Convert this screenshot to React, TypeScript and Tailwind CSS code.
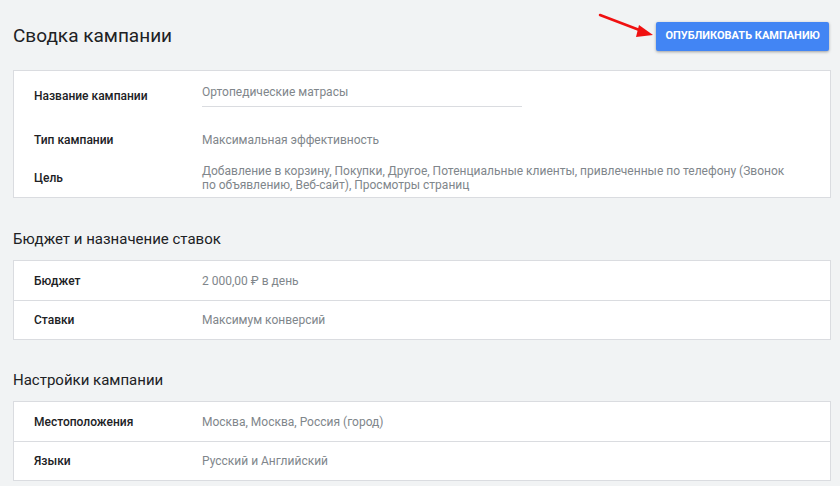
import React from 'react'

const font = { fontFamily: 'Roboto, "Noto Sans", Arial, sans-serif' }

function Row({ label, value, divider }: { label: string; value: string; divider?: boolean }) {
  return (
    <div className={'flex items-center h-[39px] ' + (divider ? 'border-t border-[#dadce0]' : '')}>
      <div className='w-[188px] pl-[20px] text-[12px] font-medium text-[#202124]'>{label}</div>
      <div className='text-[12px] text-[#80868b]'>{value}</div>
    </div>
  )
}

export default function App() {
  return (
    <div className='relative min-h-[486px] w-full bg-[#f1f3f4] pl-[13px] pr-[9px]' style={font}>
      <svg className='absolute left-[596px] top-[10px]' width='64' height='32' viewBox='0 0 64 32'>
        <line x1='4' y1='5' x2='46' y2='21' stroke='#f01010' strokeWidth='2.5' strokeLinecap='round' />
        <polygon points='57,25 43,15 40,27' fill='#f01010' />
      </svg>

      <div className='flex items-center justify-between h-[51px] pt-[22px]'>
        <h1 className='text-[19px] text-[#202124]'>Сводка кампании</h1>
        <button className='mr-[2px] h-[29px] rounded-[2px] bg-[#4285f4] px-[9px] text-[11px] font-bold text-white shadow-[0_1px_3px_rgba(0,0,0,0.35)]'>
          ОПУБЛИКОВАТЬ КАМПАНИЮ
        </button>
      </div>

      <div className='mt-[19px] border border-[#dadce0] bg-white'>
        <div className='flex items-center h-[49px]'>
          <div className='w-[188px] pl-[20px] pt-[1px] text-[12px] font-medium text-[#202124]'>Название кампании</div>
          <div className='w-[320px] border-b border-[#dadce0] pb-[5px] pt-[1px] text-[12px] text-[#80868b] -mt-[2px]'>Ортопедические матрасы</div>
        </div>
        <Row label='Тип кампании' value='Максимальная эффективность' />
        <div className='flex items-center h-[38px]'>
          <div className='w-[188px] shrink-0 pl-[20px] text-[12px] font-medium text-[#202124]'>Цель</div>
          <div className='w-[590px] text-[12px] leading-[14px] text-[#80868b]'>
            Добавление в корзину, Покупки, Другое, Потенциальные клиенты, привлеченные по телефону (Звонок по объявлению, Веб-сайт), Просмотры страниц
          </div>
        </div>
      </div>

      <h2 className='mt-[31px] text-[15px] leading-[20px] text-[#202124]'>Бюджет и назначение ставок</h2>
      <div className='mt-[11px] border border-[#dadce0] bg-white'>
        <Row label='Бюджет' value='2 000,00 ₽ в день' />
        <Row label='Ставки' value='Максимум конверсий' divider />
      </div>

      <h2 className='mt-[30px] text-[15px] leading-[20px] text-[#202124]'>Настройки кампании</h2>
      <div className='mt-[11px] border border-[#dadce0] bg-white'>
        <Row label='Местоположения' value='Москва, Москва, Россия (город)' />
        <Row label='Языки' value='Русский и Английский' divider />
      </div>
    </div>
  )
}
